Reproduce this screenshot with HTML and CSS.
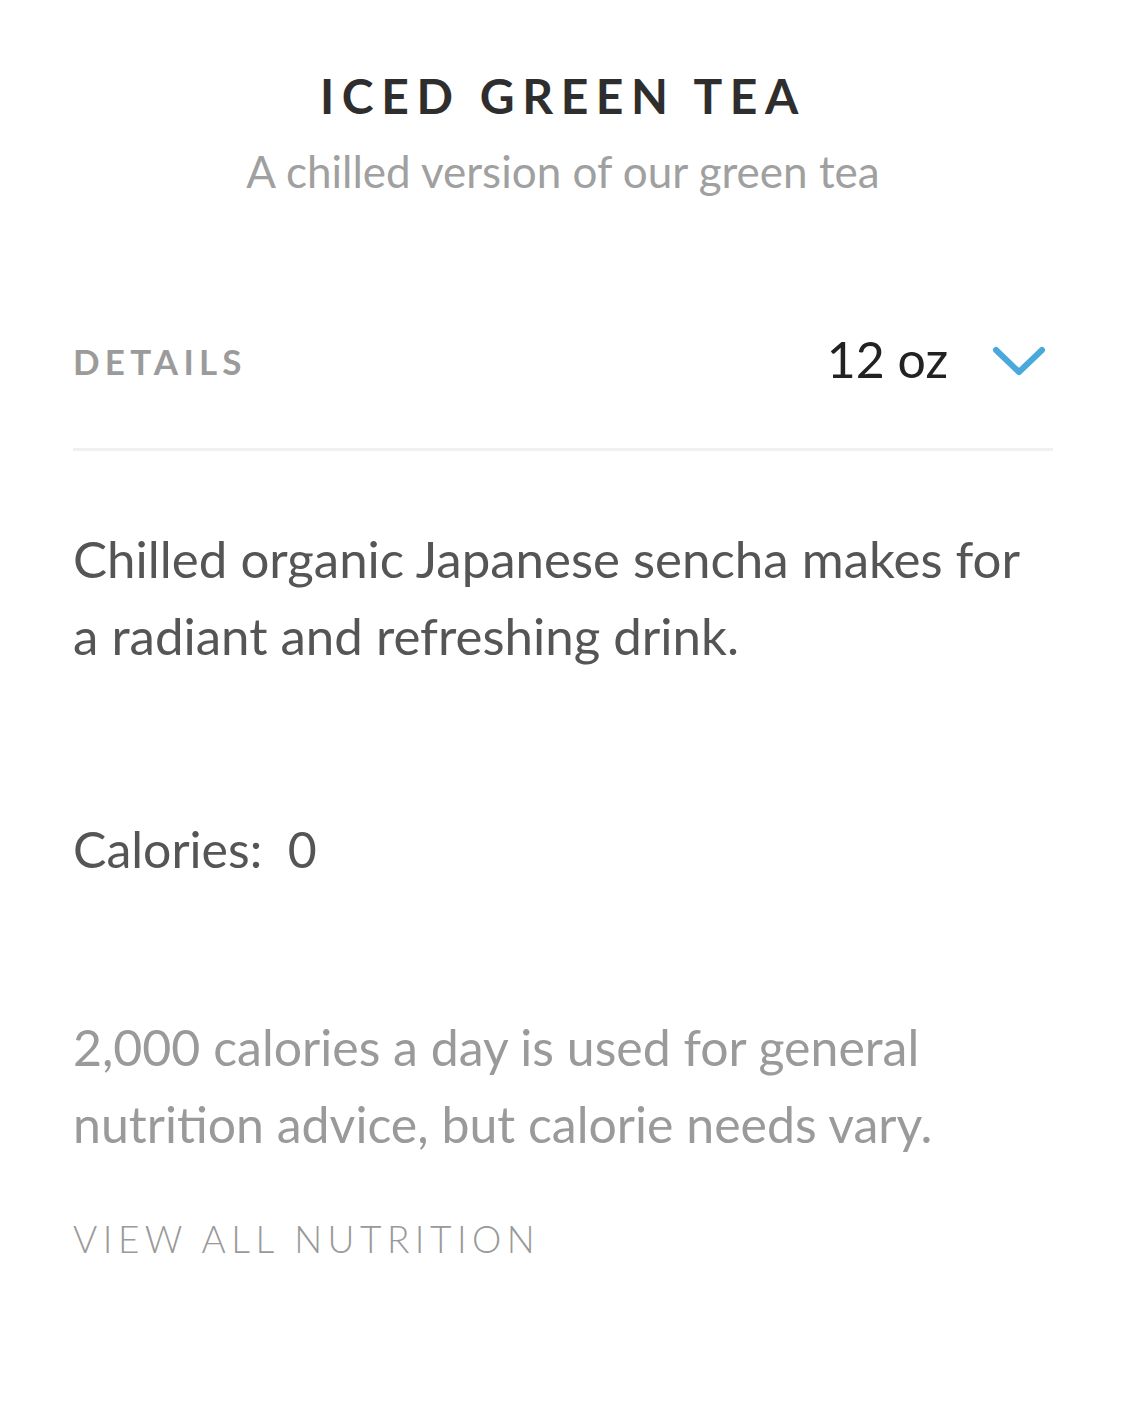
FILE: index.html
```html
<!DOCTYPE html>
<html>
<head>
<meta charset="utf-8">
<link rel="stylesheet" href="styles.css">
</head>
<body>
<main class="page">
  <header class="head">
    <h1 class="title">ICED GREEN TEA</h1>
    <p class="subtitle">A chilled version of our green tea</p>
  </header>
  <section class="details-bar">
    <span class="details-label">DETAILS</span>
    <button class="size-select">
      <span class="size-value">12 oz</span>
      <svg class="chev" width="54" height="30" viewBox="0 0 54 30"><path d="M4 4 L27 26 L50 4" fill="none" stroke="#4aa9dc" stroke-width="6" stroke-linecap="round" stroke-linejoin="round"/></svg>
    </button>
  </section>
  <p class="desc">Chilled organic Japanese sencha makes for a radiant and refreshing drink.</p>
  <p class="calories">Calories:&nbsp; 0</p>
  <p class="note">2,000 calories a day is used for general nutrition advice, but calorie needs vary.</p>
  <a class="view-all">VIEW ALL NUTRITION</a>
</main>
</body>
</html>
```

FILE: styles.css
```css
* { box-sizing: border-box; }
html, body { margin: 0; padding: 0; background: #fff; }
body { font-family: Lato, "Noto Sans", sans-serif; }
.page { padding: 0 72px 0 73px; }
.head { text-align: center; padding-top: 66px; }
.title {
  margin: 0;
  font-size: 48px;
  line-height: 60px;
  font-weight: 700;
  letter-spacing: 7.6px;
  padding-left: 0;
  color: #2e2e2e;
}
.subtitle {
  margin: 20px 0 0;
  font-size: 44px;
  line-height: 50px;
  font-weight: 400;
  color: #a0a0a0;
}
.details-bar {
  margin-top: 138px;
  height: 117px;
  display: flex;
  align-items: flex-start;
  justify-content: space-between;
  border-bottom: 3px solid #f0f0f0;
}
.details-label {
  font-size: 35px;
  line-height: 50px;
  letter-spacing: 5.2px;
  color: #9b9b9b;
  font-weight: 700;
  margin-top: 2px;
}
.size-select {
  display: flex;
  align-items: center;
  gap: 44px;
  margin-top: -5px;
  border: 0;
  background: none;
  padding: 0 7px 0 0;
  font-family: inherit;
}
.size-value {
  font-size: 50px;
  line-height: 60px;
  color: #222;
}
.chev { display: block; margin-top: 4px; }
.desc {
  margin: 69px 0 0;
  font-size: 51px;
  line-height: 77px;
  color: #555;
}
.calories {
  margin: 137px 0 0;
  font-size: 50px;
  line-height: 77px;
  color: #555;
}
.note {
  margin: 121px 0 0;
  font-size: 50px;
  line-height: 77px;
  color: #9a9a9a;
}
.view-all {
  display: block;
  margin-top: 51px;
  font-size: 37px;
  line-height: 50px;
  letter-spacing: 5.5px;
  color: #999;
  font-weight: 300;
}
```
